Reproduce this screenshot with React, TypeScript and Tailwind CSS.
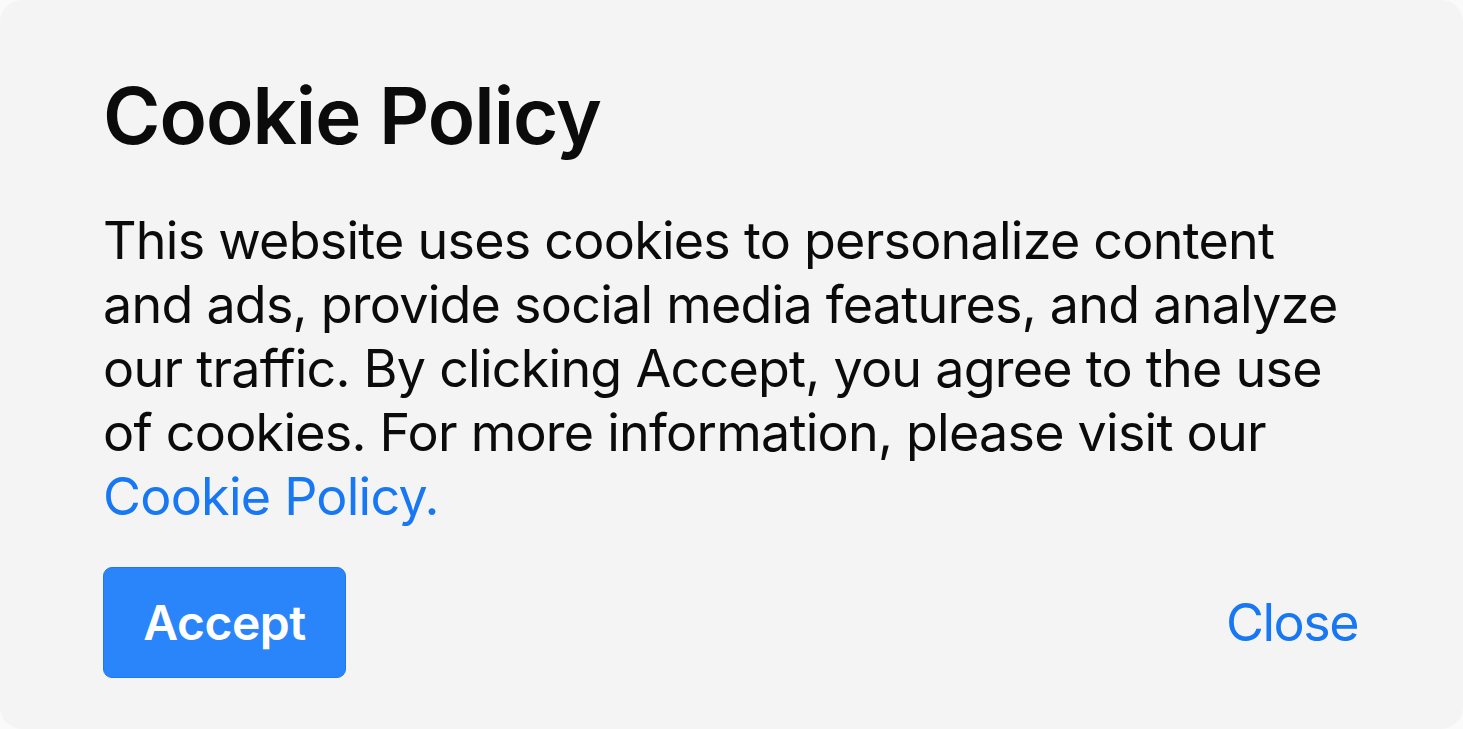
export default function App() {
  return (
    <div className="h-[729px] w-[1463px] bg-[#fafafa] font-['Inter',sans-serif]">
      <div className="flex h-full w-full flex-col rounded-[22px] bg-[#f4f4f4] px-[103px] pt-[77px]">
        <h1 className="text-[78px] font-semibold leading-none tracking-[-1px] text-[#0b0b0b]">
          Cookie Policy
        </h1>
        <p className="mt-[54px] text-[52px] leading-[64px] tracking-[-0.75px] text-[#0b0b0b]">
          This website uses cookies to personalize content
          <br />
          and ads, provide social media features, and analyze
          <br />
          our traffic. By clicking Accept, you agree to the use
          <br />
          of cookies. For more information, please visit our
          <br />
          <a href="#" className="text-[#1877f2]">
            Cookie Policy.
          </a>
        </p>
        <div className="mt-[38px] flex items-center justify-between pr-[2px]">
          <button className="flex h-[111px] w-[243px] items-center justify-center rounded-[9px] border border-[#1f78ef] bg-[#2a85fb] text-[48px] font-semibold tracking-[-0.5px] text-white">
            Accept
          </button>
          <button className="text-[52px] tracking-[-1.5px] text-[#1877f2]">Close</button>
        </div>
      </div>
    </div>
  );
}
